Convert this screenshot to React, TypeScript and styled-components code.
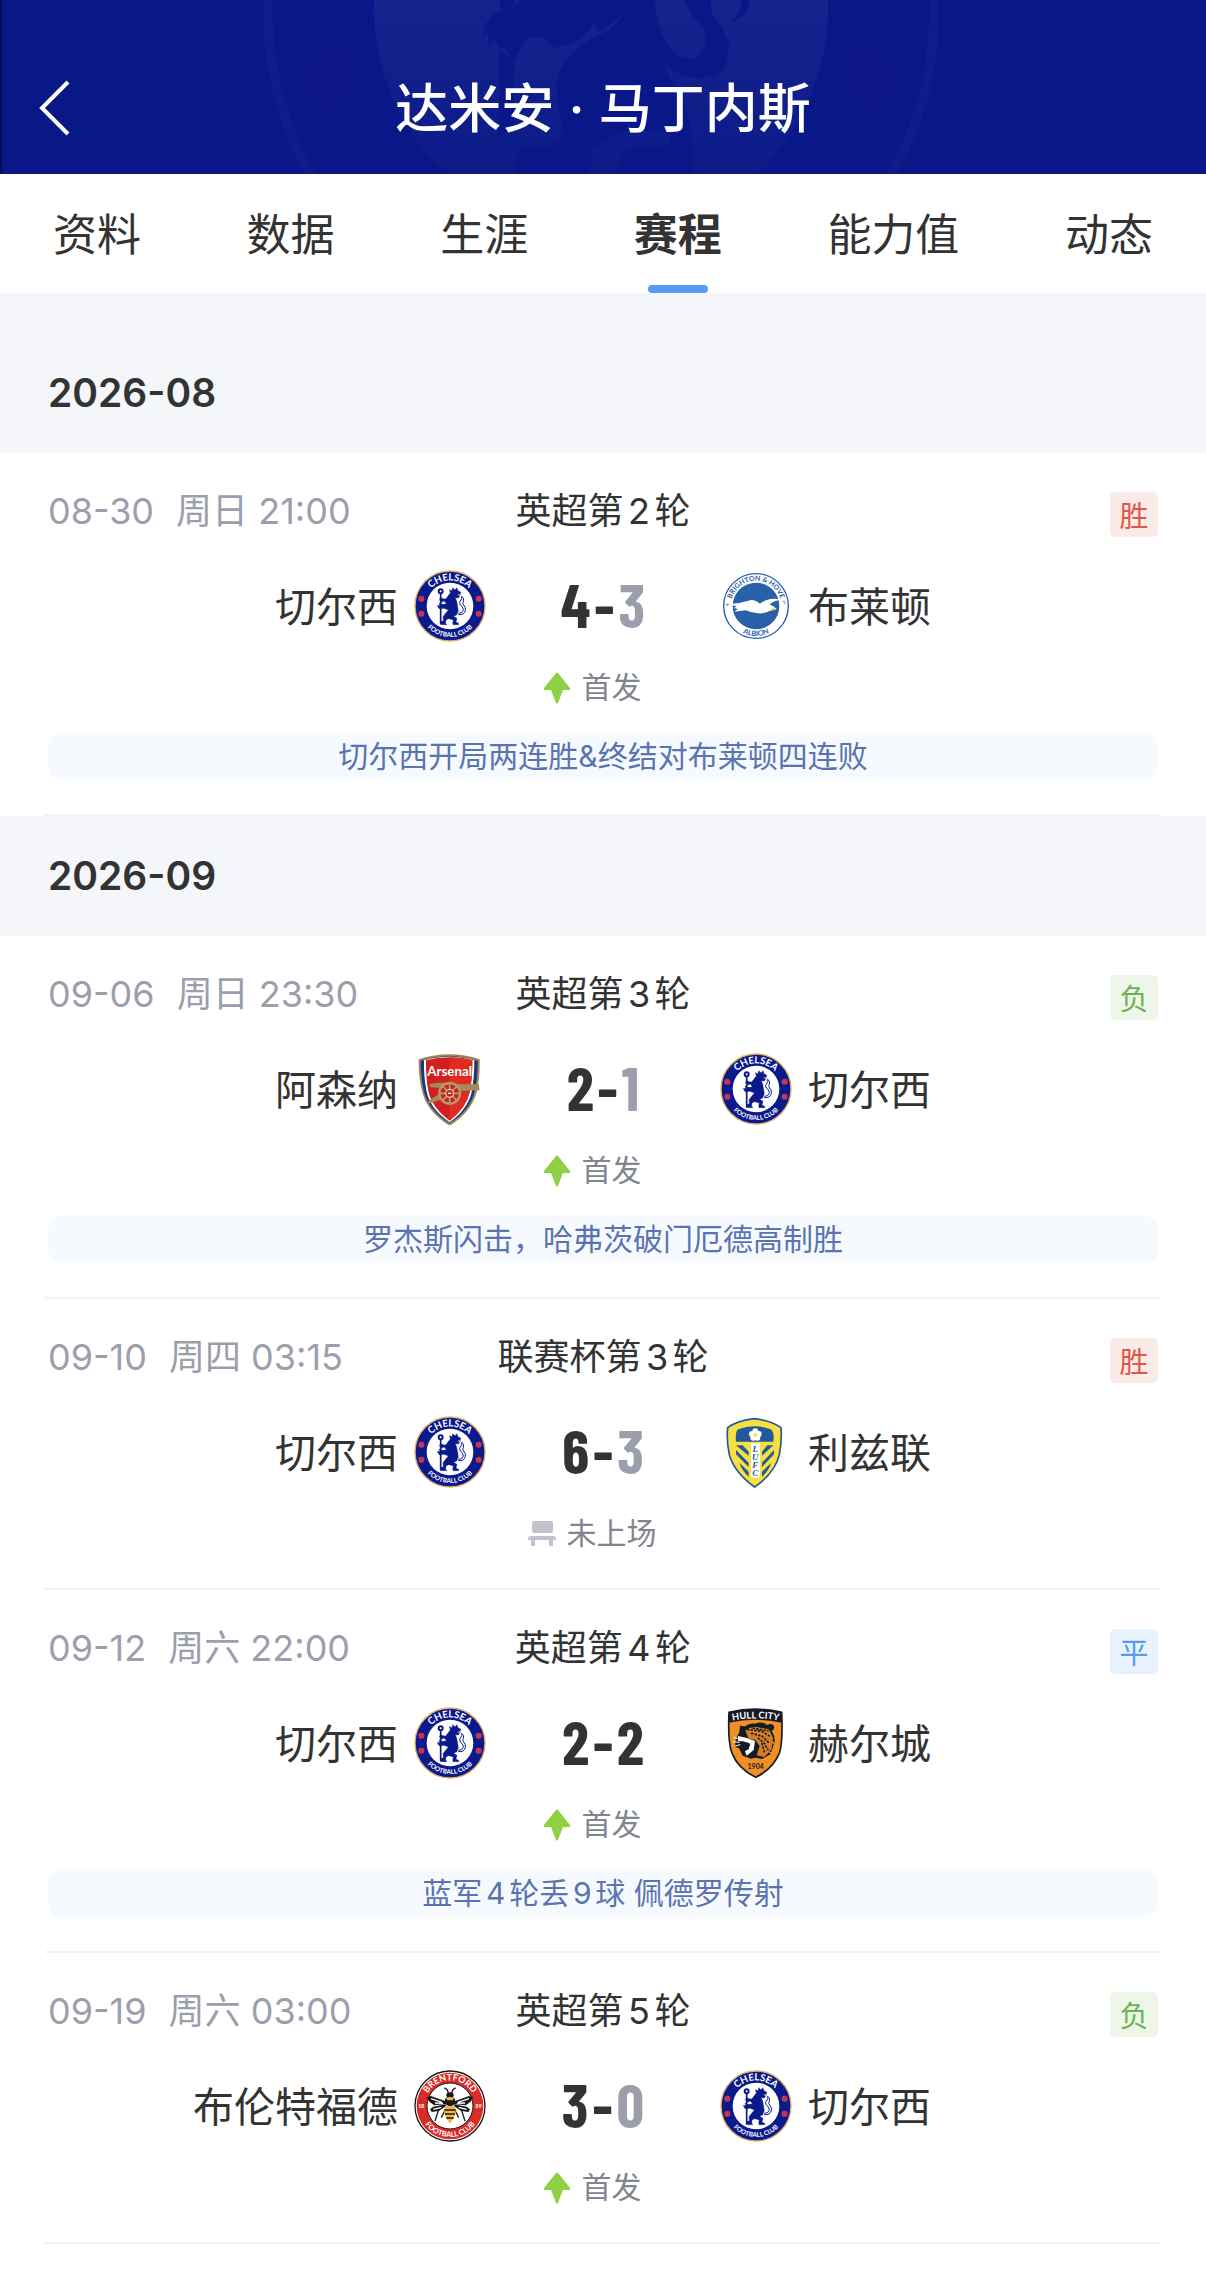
import React, { useId } from 'react';
import styled, { createGlobalStyle } from 'styled-components';

type Result = 'win' | 'lose' | 'draw';
type Club = 'chelsea' | 'brighton' | 'arsenal' | 'leeds' | 'hull' | 'brentford';

interface ITeam {
  club: Club;
  name: string;
  score: number;
}

interface IMatch {
  date: string;
  day: string;
  time: string;
  round: string;
  result: Result;
  home: ITeam;
  away: ITeam;
  started: boolean;
  note?: string;
}

interface IMonth {
  month: string;
  matches: IMatch[];
}

const TABS = ['资料', '数据', '生涯', '赛程', '能力值', '动态'];
const ACTIVE_TAB = '赛程';

const RESULT_LABEL: Record<Result, string> = { win: '胜', lose: '负', draw: '平' };

const SCHEDULE: IMonth[] = [
  {
    month: '2026-08',
    matches: [
      {
        date: '08-30', day: '周日', time: '21:00', round: '英超第2轮', result: 'win',
        home: { club: 'chelsea', name: '切尔西', score: 4 },
        away: { club: 'brighton', name: '布莱顿', score: 3 },
        started: true,
        note: '切尔西开局两连胜&终结对布莱顿四连败',
      },
    ],
  },
  {
    month: '2026-09',
    matches: [
      {
        date: '09-06', day: '周日', time: '23:30', round: '英超第3轮', result: 'lose',
        home: { club: 'arsenal', name: '阿森纳', score: 2 },
        away: { club: 'chelsea', name: '切尔西', score: 1 },
        started: true,
        note: '罗杰斯闪击，哈弗茨破门厄德高制胜',
      },
      {
        date: '09-10', day: '周四', time: '03:15', round: '联赛杯第3轮', result: 'win',
        home: { club: 'chelsea', name: '切尔西', score: 6 },
        away: { club: 'leeds', name: '利兹联', score: 3 },
        started: false,
      },
      {
        date: '09-12', day: '周六', time: '22:00', round: '英超第4轮', result: 'draw',
        home: { club: 'chelsea', name: '切尔西', score: 2 },
        away: { club: 'hull', name: '赫尔城', score: 2 },
        started: true,
        note: '蓝军4轮丢9球 佩德罗传射',
      },
      {
        date: '09-19', day: '周六', time: '03:00', round: '英超第5轮', result: 'lose',
        home: { club: 'brentford', name: '布伦特福德', score: 3 },
        away: { club: 'chelsea', name: '切尔西', score: 0 },
        started: true,
      },
    ],
  },
];

const ChelseaCrest = () => {
  const id = useId();
  return (
    <Crest viewBox="42 30 216 216" role="img" aria-label="切尔西队徽">
      <defs>
        <path id={`${id}t`} d="M73 138a77 77 0 0 1 154 0" />
        <path id={`${id}b`} d="M57 138a93 93 0 0 0 186 0" />
      </defs>
      <circle cx="150" cy="138" r="105" fill="#0a1a8c" stroke="#e0b060" strokeWidth="4" />
      <circle cx="150" cy="138" r="70" fill="#fff" />
      <CrestText fill="#fff" fontSize="29"><textPath href={`#${id}t`} startOffset="50%">CHELSEA</textPath></CrestText>
      <CrestText fill="#fff" fontSize="19"><textPath href={`#${id}b`} startOffset="50%">FOOTBALL CLUB</textPath></CrestText>
      {[[64, 116], [64, 161], [236, 116], [236, 161]].map(([x, y]) => (
        <g key={`${x}-${y}`}>
          <circle cx={x} cy={y} r="9" fill="#d8394b" />
          <circle cx={x} cy={y} r="5" fill="none" stroke="#39208a" strokeWidth="2" strokeDasharray="2 3" />
        </g>
      ))}
      <g fill="#0a1a8c" stroke="#0a1a8c" strokeLinejoin="round" strokeLinecap="round">
        <path d="M122 102v90" strokeWidth="5" />
        <circle cx="122" cy="94" r="6" fill="#fff" strokeWidth="6" />
        <path d="M151 98l-3-9 8 3 2-9 7 6 6-6 3 9 9 5-3 5-9 2 8 4-4 6-9-1 4 10 3 16 2 13-5 13-9 4 10 6-3 11 8 4v4h-17l-1-6 2-8-14-4-8 4-1 10 4 4h-15l-6-4 4-6 6-2-1-12 9-12 7-8-13-5-13 2-4-4-3-7 8 1-3-8 9 4 13-1-6-9-8 4-2-6-5-1 4-7 8 3 7 1z" strokeWidth="1" />
        <path d="M176 160q17-2 13-15-2-6-8-10-6-8 2-15 4-4 2-11 9 6 5 15-4 6 1 11 7 7 5 16-3 15-20 13" fill="none" strokeWidth="3" />
      </g>
      <path d="M174 104l9 1" stroke="#e0475a" strokeWidth="3" />
    </Crest>
  );
};

const BrightonCrest = () => {
  const id = useId();
  return (
    <Crest viewBox="60 30 216 216" role="img" aria-label="布莱顿队徽">
      <defs>
        <path id={`${id}t`} d="M92 138a76 76 0 0 1 152 0" />
        <path id={`${id}b`} d="M78 138a90 90 0 0 0 180 0" />
      </defs>
      <circle cx="168" cy="138" r="97" fill="#fff" stroke="#2860aa" strokeWidth="4" />
      <circle cx="168" cy="138" r="70" fill="#2860aa" />
      <CrestText fill="#2860aa" fontSize="21"><textPath href={`#${id}t`} startOffset="50%">BRIGHTON &amp; HOVE</textPath></CrestText>
      <CrestText fill="#2860aa" fontSize="22"><textPath href={`#${id}b`} startOffset="50%">ALBION</textPath></CrestText>
      <path d="M90 132q35-3 66-13 15 3 24 12 13-11 31-14 20-3 37 2-29 2-39 15 10 2 20 12l-8 3-12 4q-20 10-40 6-19-2-31-8l-35 4 10-8-11-3 8-5q-12-2-20-7z" fill="#fff" />
      <path d="M214 145l17 3-13 4z" fill="#f5b32e" />
      <path d="M77 133h10M82 133v6M248 124h8M251 130h7" stroke="#2860aa" strokeWidth="2" />
    </Crest>
  );
};

const ArsenalCrest = () => (
  <Crest viewBox="42 36 216 216" role="img" aria-label="阿森纳队徽">
    <path d="M56 55q48-15 92-15 46 0 91 15 1 55-9 99-17 61-81 100-66-39-82-100-12-45-11-99z" fill="#9c8454" />
    <path d="M62 60q43-14 86-14 44 0 85 14 0 51-9 92-15 57-75 94-62-37-77-94-10-42-10-92z" fill="#163a82" />
    <path d="M72 58q37-11 76-11 40 0 75 11 0 51-8 95-11 51-66 91-58-40-69-91-9-44-8-95z" fill="#fff" />
    <path d="M78 58q34-9 70-9 37 0 69 9 0 51-7 92-10 49-61 89-54-40-64-89-8-41-7-92z" fill="#d2201f" />
    <path d="M149 49q36 0 68 9 0 51-7 92-10 49-61 89z" fill="#e02b20" />
    <CrestText fill="#fff" fontSize="40" x="149" y="104">Arsenal</CrestText>
    <path d="M93 139l-5-6 4-5 28-3 62 5 54-1 3 19-56 2-22 14-71 23-7-5 7-6 26-16 3-20z" fill="#a38a58" />
    <circle cx="149" cy="157" r="31" fill="#d2201f" stroke="#b39c6b" strokeWidth="7" />
    <path d="M149 126v62M118 157h62M127 135l44 44M171 135l-44 44" stroke="#b39c6b" strokeWidth="5" />
    <circle cx="149" cy="157" r="12" fill="#d2201f" stroke="#d9c9a0" strokeWidth="4" />
    <path d="M144 157h10" stroke="#fff" strokeWidth="4" />
  </Crest>
);

const LeedsCrest = () => (
  <Crest viewBox="30 30 216 216" role="img" aria-label="利兹联队徽">
    <path d="M133 38q50 5 80 27 3 40-5 81-13 55-74 97-61-44-76-97-9-41-5-81 30-22 80-27z" fill="#f7df3f" stroke="#23599b" strokeWidth="5" />
    <path d="M78 107q-3-31 7-37 47-19 97 0 12 8 8 37z" fill="#23599b" />
    <g fill="#fff">
      <circle cx="136" cy="76" r="9" />
      <circle cx="146" cy="84" r="9" />
      <circle cx="142" cy="95" r="9" />
      <circle cx="130" cy="95" r="9" />
      <circle cx="126" cy="84" r="9" />
    </g>
    <circle cx="136" cy="87" r="6" fill="#f1df69" />
    <path d="M78 118h20l18 19v12zM78 132l38 38v13l-38-38zM88 170l28 27v15q-20-18-28-42zM190 118h-18l-16 19v12zM192 132l-36 38v13l36-38zM184 170l-28 27v15q20-18 28-42z" fill="#23599b" />
    <path d="M123 111h27v97q0 8-14 8-13 0-13-8z" fill="#fff" />
    <ScriptText fill="#23599b" fontSize="27">
      <tspan x="136" y="139">L</tspan>
      <tspan x="136" y="162">U</tspan>
      <tspan x="136" y="185">F</tspan>
      <tspan x="136" y="209">C</tspan>
    </ScriptText>
  </Crest>
);

const HullCrest = () => {
  const id = useId();
  return (
    <Crest viewBox="30 33 216 216" role="img" aria-label="赫尔城队徽">
      <defs>
        <path id={id} d="M62 75q75-16 150 0" />
      </defs>
      <path d="M57 49q79-19 158 0 4 86-6 120-19 49-72 75-53-26-72-75-12-34-8-120z" fill="#f09023" stroke="#151b26" strokeWidth="5" />
      <path d="M57 49q79-19 158 0v31q-79-17-158 0z" fill="#151b26" />
      <CrestText fill="#fff" fontSize="28"><textPath href={`#${id}`} startOffset="50%">HULL CITY</textPath></CrestText>
      <path d="M88 108l2-19 16 2q11-11 29-8 22-9 36 4 17-7 21 4 2 9-6 14 14 24 4 46l-9 24-25 14-18-4-16 3-24-9-11-22-12-5 2-21z" fill="#151b26" />
      <path d="M106 103q22-15 45-8l26 5 12 26-4 34-22 23-23-5 9-27-12-18-22-6z" fill="#d67d22" />
      <g stroke="#151b26" strokeWidth="5" strokeLinecap="round" strokeDasharray="3 8">
        <path d="M113 101l43 5 24 15M125 112l32 9 20 20M145 127l18 15 11 19M156 143l8 28M130 97l44 7" fill="none" />
      </g>
      <path d="M84 120l24 5 27 10-4 27-21 17-5-13 10-7 4-17-20-6-15-1z" fill="#fff" />
      <path d="M101 139l20 5-6 17-10-3z" fill="#151b26" />
      <path d="M71 124l19 6M69 137l20 2M75 150l16-4" stroke="#fff" strokeWidth="3" />
      <path d="M186 105l10 4-4 9M185 135l9 10-4 16M177 168l8 4" fill="none" stroke="#f09023" strokeWidth="4" />
      <CrestText fill="#151b26" fontSize="21" x="137" y="219">1904</CrestText>
    </Crest>
  );
};

const BrentfordCrest = () => {
  const id = useId();
  return (
    <Crest viewBox="42 29 216 216" role="img" aria-label="布伦特福德队徽">
      <defs>
        <path id={`${id}t`} d="M73 137a77 77 0 0 1 154 0" />
        <path id={`${id}b`} d="M57 137a93 93 0 0 0 186 0" />
      </defs>
      <circle cx="150" cy="137" r="105" fill="#fff" stroke="#191919" strokeWidth="4" />
      <circle cx="150" cy="137" r="100" fill="#d92b28" />
      <circle cx="150" cy="137" r="69" fill="#fff" stroke="#191919" strokeWidth="3" />
      <CrestText fill="#fff" fontSize="27"><textPath href={`#${id}t`} startOffset="50%">BRENTFORD</textPath></CrestText>
      <CrestText fill="#fff" fontSize="22"><textPath href={`#${id}b`} startOffset="50%">FOOTBALL CLUB</textPath></CrestText>
      <CrestText fill="#fff" fontSize="16" x="64" y="142">18</CrestText>
      <CrestText fill="#fff" fontSize="16" x="236" y="142">89</CrestText>
      <path d="M146 101l-4-12-9-7M154 101l4-12 9-7M135 134l-20 17-10 31M165 134l20 17 10 31M137 146l-13 26M163 146l13 26" fill="none" stroke="#191919" strokeWidth="4" />
      <path d="M141 124L93 107l-13 4 9 14 14 10 35-4zM159 124l48-17 13 4-9 14-14 10-35-4z" fill="#191919" />
      <path d="M137 132l-37 7-10 8 5 8 19-3 24-14zM163 132l37 7 10 8-5 8-19-3-24-14z" fill="#191919" />
      <path d="M93 115l33 11M105 128l24 1M100 147l24-6M207 115l-33 11M195 128l-24 1M200 147l-24-6" stroke="#fff" strokeWidth="4" />
      <ellipse cx="150" cy="104" rx="11" ry="8" fill="#191919" />
      <ellipse cx="150" cy="123" rx="16" ry="15" fill="#191919" />
      <path d="M138 114q12-8 24 0l-4 6h-16z" fill="#f4b63c" />
      <path d="M136 137h28q8 20-3 37l-11 16-11-16q-11-17-3-37z" fill="#f4b63c" />
      <path d="M133 149h34M135 161h30M139 173h22" stroke="#191919" strokeWidth="4" />
    </Crest>
  );
};

const CRESTS: Record<Club, React.FC> = {
  chelsea: ChelseaCrest,
  brighton: BrightonCrest,
  arsenal: ArsenalCrest,
  leeds: LeedsCrest,
  hull: HullCrest,
  brentford: BrentfordCrest,
};

const HeaderCrest = () => (
  <Watermark viewBox="0 0 1206 174" aria-hidden="true">
    <defs>
      <linearGradient id="disc" x1="0" y1="0" x2="0" y2="174" gradientUnits="userSpaceOnUse">
        <stop offset="0" stopColor="#15238d" />
        <stop offset="1" stopColor="#0c1b88" />
      </linearGradient>
    </defs>
    <circle cx="601" cy="12" r="333" fill="none" stroke="#0f1c8a" strokeWidth="10" />
    <circle cx="601" cy="8" r="227" fill="url(#disc)" />
    {[331, 871].map((x) => (
      <g key={x} fill="#0f1787" stroke="#131886" strokeWidth="2">
        {[0, 60, 120, 180, 240, 300].map((angle) => (
          <ellipse key={angle} cx={x} cy="60" rx="10" ry="12" transform={`rotate(${angle} ${x} 78)`} />
        ))}
        <circle cx={x} cy="78" r="9" />
      </g>
    ))}
    <g transform="translate(440 0) scale(.3333)" fill="#091789">
      <path d="M240 0L220 24Q165 28 148 58 125 84 132 108L143 96 148 137 163 116 182 150 193 138 212 172 226 182Q240 114 290 110 332 118 345 145 435 124 460 68L480 95Q530 64 560 33 525 86 470 108 362 162 350 250 350 330 372 390 365 436 310 440L250 442Q222 466 232 522H432Q468 490 452 450 500 420 540 395L690 390V436L580 440Q528 462 536 522H752Q766 410 735 320 700 260 672 192 740 250 830 226 870 194 866 130 852 84 822 50 806 22 815 0H735Q748 44 790 82 812 126 774 170 724 194 680 130 646 66 645 0Z" />
      <path d="M928 0Q930 48 872 66 906 40 903 0ZM179 0h44v20l-44 8zM178 152l44 24v210l-44 20z" />
    </g>
  </Watermark>
);

const MatchCard = ({ match }: { match: IMatch }) => {
  const { home, away } = match;
  const HomeCrest = CRESTS[home.club];
  const AwayCrest = CRESTS[away.club];
  return (
    <Card>
      <MetaRow>
        <Kickoff>
          <span>{match.date}</span>
          <span>{match.day} {match.time}</span>
        </Kickoff>
        <Round>{match.round}</Round>
        <Badge result={match.result}>{RESULT_LABEL[match.result]}</Badge>
      </MetaRow>
      <TeamsRow>
        <TeamSide side="home">
          <TeamName>{home.name}</TeamName>
          <HomeCrest />
        </TeamSide>
        <Score>
          <Goals behind={home.score < away.score}>{home.score}</Goals>
          <span>-</span>
          <Goals behind={away.score < home.score}>{away.score}</Goals>
        </Score>
        <TeamSide side="away">
          <AwayCrest />
          <TeamName>{away.name}</TeamName>
        </TeamSide>
      </TeamsRow>
      <StatusRow>
        {match.started ? (
          <StatusIcon viewBox="0 0 28 32" aria-hidden="true">
            <path d="M13 1q1-1 2 0l12 15q1 2-1 2h-6l-5 13q-1 1-2 0L8 18H2q-2 0-1-2z" fill="#8fd044" />
          </StatusIcon>
        ) : (
          <StatusIcon viewBox="0 0 28 32" aria-hidden="true">
            <path d="M6 3h17q2 0 2 2v8q0 2-2 2H6q-2 0-2-2V5q0-2 2-2zM3 18h22q3 0 3 3 0 1-1 1h-2v6h-4v-6H7v6H3v-6H1q-1 0-1-1 0-3 3-3z" fill="#c0c2cc" />
          </StatusIcon>
        )}
        <span>{match.started ? '首发' : '未上场'}</span>
      </StatusRow>
      {match.note && <Note>{match.note}</Note>}
    </Card>
  );
};

const App = () => {
  return (
    <>
      <GlobalStyle />
      <Header>
        <HeaderCrest />
        <BackButton type="button" aria-label="返回">
          <svg width="32" height="56" viewBox="0 0 32 56" fill="none" stroke="#fff" strokeWidth="4">
            <path d="M29 2L3 28l26 26" />
          </svg>
        </BackButton>
        <Title>达米安 · 马丁内斯</Title>
      </Header>
      <TabBar>
        {TABS.map((tab) => (
          <Tab key={tab} href="#" active={tab === ACTIVE_TAB}>{tab}</Tab>
        ))}
      </TabBar>
      <Schedule>
        {SCHEDULE.map(({ month, matches }) => (
          <section key={month}>
            <MonthTitle>{month}</MonthTitle>
            {matches.map((match) => (
              <MatchCard key={match.date} match={match} />
            ))}
          </section>
        ))}
      </Schedule>
    </>
  );
};

const GlobalStyle = createGlobalStyle`
  * {
    box-sizing: border-box;
  }
  body {
    margin: 0;
    background: #fff;
    color: #333;
    font-family: Inter, 'Noto Sans CJK SC', sans-serif;
    text-autospace: normal;
  }
`;

const Crest = styled.svg`
  width: 72px;
  height: 72px;
  flex: none;
`;

const CrestText = styled.text`
  font-family: Lato, 'Liberation Sans', sans-serif;
  font-weight: bold;
  text-anchor: middle;
`;

const ScriptText = styled.text`
  font-family: 'Liberation Serif', serif;
  font-style: italic;
  font-weight: bold;
  text-anchor: middle;
`;

const Header = styled.header`
  position: relative;
  display: flex;
  justify-content: center;
  height: 174px;
  padding-top: 73px;
  background: #091789;
  box-shadow: inset 2px 0 #060c50;
  overflow: hidden;
`;

const Watermark = styled.svg`
  position: absolute;
  top: 0;
  left: 50%;
  width: 1206px;
  height: 174px;
  transform: translateX(-50%);
`;

const BackButton = styled.button`
  position: absolute;
  top: 80px;
  left: 39px;
  padding: 0;
  border: 0;
  background: none;
  line-height: 0;
`;

const Title = styled.h1`
  position: relative;
  margin: 0;
  color: #fff;
  font-size: 53px;
  font-weight: 500;
  line-height: 72px;
`;

const TabBar = styled.nav`
  display: flex;
  justify-content: space-between;
  padding: 0 53px;
  height: 119px;
`;

const Tab = styled.a<{ active: boolean }>`
  position: relative;
  color: #333;
  font-size: 44px;
  font-weight: ${({ active }) => (active ? 700 : 400)};
  line-height: 123px;
  text-decoration: none;

  &::after {
    content: '';
    display: ${({ active }) => (active ? 'block' : 'none')};
    position: absolute;
    bottom: 0;
    left: 50%;
    width: 60px;
    height: 8px;
    margin-left: -30px;
    border-radius: 4px;
    background: #559df2;
  }
`;

const Schedule = styled.main`
  padding-top: 40px;
  background: linear-gradient(#f5f6fa 40px, #fff 40px);
`;

const MonthTitle = styled.h2`
  margin: 0;
  padding: 0 48px;
  background: #f5f6fa;
  font-size: 39px;
  font-weight: 600;
  line-height: 120px;
`;

const Card = styled.article`
  margin: 0 45px;
  padding: 39px 3px 34px;
  border-bottom: 2px solid #f2f2f4;
`;

const MetaRow = styled.div`
  display: grid;
  grid-template-columns: 1fr auto 1fr;
  align-items: start;
  font-size: 36px;
  line-height: 38px;
`;

const Kickoff = styled.div`
  display: flex;
  gap: 22px;
  color: #9c9fab;
`;

const Round = styled.span`
  color: #333;
`;

const badgeColors = {
  win: { text: '#e0564a', back: '#fbebe8' },
  lose: { text: '#6db251', back: '#edf6e9' },
  draw: { text: '#559df2', back: '#e8f2fd' },
};

const Badge = styled.span<{ result: Result }>`
  justify-self: end;
  width: 48px;
  height: 45px;
  border-radius: 5px;
  color: ${({ result }) => badgeColors[result].text};
  background: ${({ result }) => badgeColors[result].back};
  font-size: 29px;
  line-height: 50px;
  text-align: center;
`;

const TeamsRow = styled.div`
  display: grid;
  grid-template-columns: 1fr 234px 1fr;
  align-items: center;
  margin-top: 33px;
`;

const TeamSide = styled.div<{ side: 'home' | 'away' }>`
  display: flex;
  align-items: center;
  justify-content: ${({ side }) => (side === 'home' ? 'flex-end' : 'flex-start')};
  gap: 16px;
`;

const TeamName = styled.span`
  padding-top: 2px;
  font-size: 41px;
  line-height: 60px;
`;

const Score = styled.div`
  display: flex;
  align-items: center;
  justify-content: center;
  gap: 4px;
  padding-bottom: 4px;
  font-family: 'Barlow Condensed', 'Roboto Condensed', 'Liberation Sans', sans-serif;
  font-size: 61px;
  font-weight: bold;
  line-height: 68px;
`;

const Goals = styled.span<{ behind: boolean }>`
  color: ${({ behind }) => (behind ? '#9c9fab' : '#333')};
`;

const StatusRow = styled.div`
  display: flex;
  align-items: center;
  justify-content: center;
  gap: 11px;
  margin-top: 25px;
  padding-right: 22px;
  color: #83858e;
  font-size: 30px;
  line-height: 41px;
`;

const StatusIcon = styled.svg`
  width: 28px;
  height: 32px;
`;

const Note = styled.p`
  margin: 24px 0 0;
  border-radius: 14px;
  background: #f6faff;
  color: #5974b0;
  font-size: 30px;
  line-height: 48px;
  text-align: center;
`;

export default App;
